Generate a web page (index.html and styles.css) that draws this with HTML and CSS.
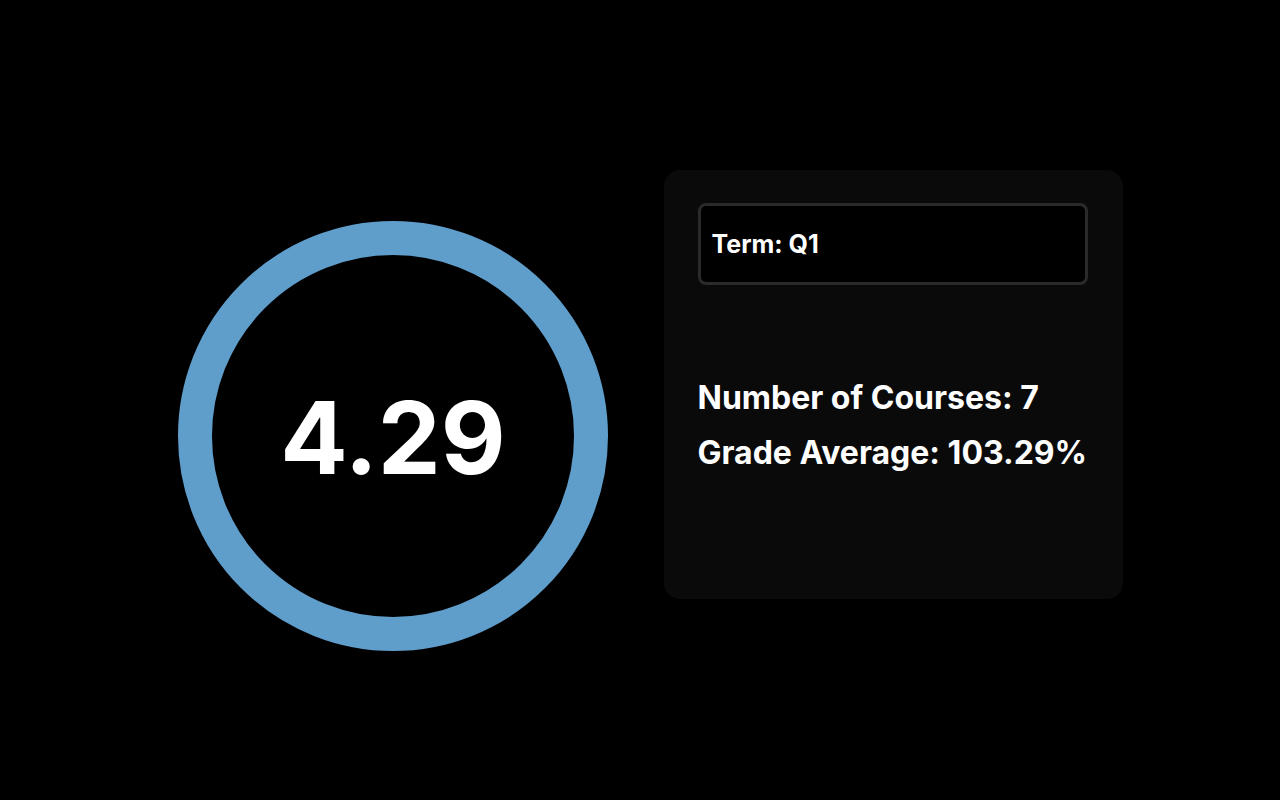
FILE: index.html
```html
<!DOCTYPE html>
<html lang="en">
<head>
  <meta charset="UTF-8" />
  <title>GPA Overview</title>
  <link rel="stylesheet" href="styles.css">
</head>
<body>

<!-- GPA overview -->
<main class="dashboard">
  <div class="gpa-col">
    <div class="gpa-ring">
      <span class="gpa-value">4.29</span>
    </div>
  </div>

  <section class="summary-card">
    <div class="term-box">Term: Q1</div>
    <div class="stats">
      <p>Number of Courses: 7</p>
      <p>Grade Average: 103.29%</p>
    </div>
  </section>
</main>

</body>
</html>
```

FILE: styles.css
```css
body {
  margin: 0;
  background-color: #000;
  color: #fff;
  font-family: Inter, "Noto Sans", sans-serif;
  font-weight: 700;
}
.dashboard {
  display: grid;
  grid-template-columns: 500px 500px;
  align-items: start;
  margin-left: 143px;
  padding-top: 170px;
}
.gpa-col {
  display: flex;
  justify-content: center;
  padding-top: 51px;
}
.gpa-ring {
  width: 430px;
  height: 430px;
  box-sizing: border-box;
  border: 34px solid #5f9dcb;
  border-radius: 50%;
  display: flex;
  align-items: center;
  justify-content: center;
}
.gpa-value {
  font-size: 100px;
  line-height: 1;
  margin-top: 4px;
}
.summary-card {
  justify-self: center;
  width: 459px;
  height: 429px;
  box-sizing: border-box;
  padding: 33px 35px 33px 34px;
  background: #0a0a0a;
  border-radius: 16px;
  display: flex;
  flex-direction: column;
}
.term-box {
  height: 82px;
  box-sizing: border-box;
  border: 3px solid #2a2a2a;
  border-radius: 8px;
  background: #000;
  padding-left: 11px;
  display: flex;
  align-items: center;
  font-size: 25px;
}
.stats {
  flex: 1;
  display: flex;
  flex-direction: column;
  justify-content: center;
  gap: 17px;
  padding-top: 0;
}
.stats p {
  margin: 0;
  font-size: 32px;
  line-height: 38px;
}
```
